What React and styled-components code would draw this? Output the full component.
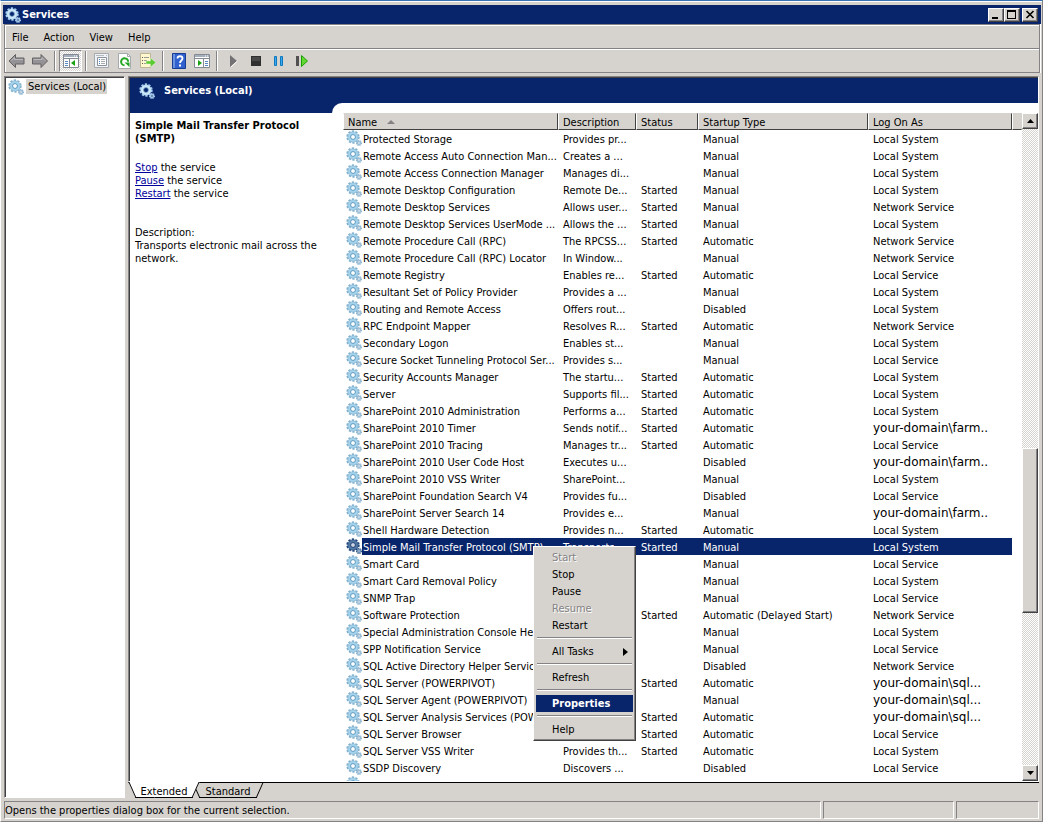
import React from 'react';
import styled, { createGlobalStyle, css } from 'styled-components';

const face = '#d6d3ce';
const navy = '#08246b';
const shadow = '#848284';
const dark = '#424142';

const S = 'Local System';
const L = 'Local Service';
const N = 'Network Service';
const FARM = 'your-domain\\farm..';
const SQL = 'your-domain\\sql...';

// name, description, started, startup type, log on as
const services = [
  ['Protected Storage', 'Provides pr...', 0, 'Manual', S],
  ['Remote Access Auto Connection Man...', 'Creates a ...', 0, 'Manual', S],
  ['Remote Access Connection Manager', 'Manages di...', 0, 'Manual', S],
  ['Remote Desktop Configuration', 'Remote De...', 1, 'Manual', S],
  ['Remote Desktop Services', 'Allows user...', 1, 'Manual', N],
  ['Remote Desktop Services UserMode ...', 'Allows the ...', 1, 'Manual', S],
  ['Remote Procedure Call (RPC)', 'The RPCSS...', 1, 'Automatic', N],
  ['Remote Procedure Call (RPC) Locator', 'In Window...', 0, 'Manual', N],
  ['Remote Registry', 'Enables re...', 1, 'Automatic', L],
  ['Resultant Set of Policy Provider', 'Provides a ...', 0, 'Manual', S],
  ['Routing and Remote Access', 'Offers rout...', 0, 'Disabled', S],
  ['RPC Endpoint Mapper', 'Resolves R...', 1, 'Automatic', N],
  ['Secondary Logon', 'Enables st...', 0, 'Manual', S],
  ['Secure Socket Tunneling Protocol Ser...', 'Provides s...', 0, 'Manual', L],
  ['Security Accounts Manager', 'The startu...', 1, 'Automatic', S],
  ['Server', 'Supports fil...', 1, 'Automatic', S],
  ['SharePoint 2010 Administration', 'Performs a...', 1, 'Automatic', S],
  ['SharePoint 2010 Timer', 'Sends notif...', 1, 'Automatic', FARM],
  ['SharePoint 2010 Tracing', 'Manages tr...', 1, 'Automatic', L],
  ['SharePoint 2010 User Code Host', 'Executes u...', 0, 'Disabled', FARM],
  ['SharePoint 2010 VSS Writer', 'SharePoint...', 0, 'Manual', S],
  ['SharePoint Foundation Search V4', 'Provides fu...', 0, 'Disabled', L],
  ['SharePoint Server Search 14', 'Provides e...', 0, 'Manual', FARM],
  ['Shell Hardware Detection', 'Provides n...', 1, 'Automatic', S],
  ['Simple Mail Transfer Protocol (SMTP)', 'Transports ...', 1, 'Manual', S],
  ['Smart Card', '', 0, 'Manual', L],
  ['Smart Card Removal Policy', '', 0, 'Manual', S],
  ['SNMP Trap', '', 0, 'Manual', L],
  ['Software Protection', '', 1, 'Automatic (Delayed Start)', N],
  ['Special Administration Console Helper', '', 0, 'Manual', S],
  ['SPP Notification Service', '', 0, 'Manual', L],
  ['SQL Active Directory Helper Service', '', 0, 'Disabled', N],
  ['SQL Server (POWERPIVOT)', '', 1, 'Automatic', SQL],
  ['SQL Server Agent (POWERPIVOT)', '', 0, 'Manual', SQL],
  ['SQL Server Analysis Services (POWE...', '', 1, 'Automatic', SQL],
  ['SQL Server Browser', '', 1, 'Automatic', L],
  ['SQL Server VSS Writer', 'Provides th...', 1, 'Automatic', S],
  ['SSDP Discovery', 'Discovers ...', 0, 'Disabled', L],
  ['', '', 0, '', ''],
];

const selected = 24;

const columns = ['Description', 'Status', 'Startup Type', 'Log On As'];

const menuItems = [
  { label: 'Start', disabled: true },
  { label: 'Stop' },
  { label: 'Pause' },
  { label: 'Resume', disabled: true },
  { label: 'Restart' },
  null,
  { label: 'All Tasks', submenu: true },
  null,
  { label: 'Refresh' },
  null,
  { label: 'Properties', active: true },
  null,
  { label: 'Help' },
];

export default function App() {
  return (
    <Window>
      <GlobalStyle />
      <TitleBar>
        <Gear light />
        <Title>Services</Title>
        <Caption aria-label="Minimize">
          <svg width="10" height="9"><path d="M1 7h6v2H1z" /></svg>
        </Caption>
        <Caption aria-label="Maximize">
          <svg width="10" height="9"><path d="M0 0h9v9H0zM1 2v6h7V2z" fillRule="evenodd" /></svg>
        </Caption>
        <Caption aria-label="Close" $apart>
          <svg width="10" height="9"><path d="M1.500 1l7 7M8.500 1l-7 7" stroke="#000" strokeWidth="1.600" /></svg>
        </Caption>
      </TitleBar>
      <MenuBar>
        {['File', 'Action', 'View', 'Help'].map(item => (
          <MenuButton key={item}>{item}</MenuButton>
        ))}
      </MenuBar>
      <Toolbar>
        <Tool aria-label="Back"><ArrowIcon back /></Tool>
        <Tool aria-label="Forward"><ArrowIcon /></Tool>
        <Divider />
        <Tool aria-label="Show/Hide Console Tree" $pressed><PaneIcon tree /></Tool>
        <Divider />
        <Tool aria-label="Properties"><PropertiesIcon /></Tool>
        <Tool aria-label="Refresh"><RefreshIcon /></Tool>
        <Tool aria-label="Export List"><ExportIcon /></Tool>
        <Divider />
        <Tool aria-label="Help"><HelpIcon /></Tool>
        <Tool aria-label="Show/Hide Action Pane"><PaneIcon /></Tool>
        <Divider />
        <Tool aria-label="Start Service">
          <svg width="16" height="16">
            <path d="M5 2v12l7-6z" fill="#737173" />
            <path d="M12.500 8L6 14" stroke="#fff" />
          </svg>
        </Tool>
        <Tool aria-label="Stop Service">
          <svg width="16" height="16">
            <path d="M3 3h10v10H3z" fill="#313031" />
            <path d="M4 4h8v4H4z" fill="#4a494a" />
          </svg>
        </Tool>
        <Tool aria-label="Pause Service">
          <svg width="16" height="16">
            <path d="M3.500 3.500h2v9h-2zM9.500 3.500h2v9h-2z" fill="#39aaef" stroke="#1079bd" />
          </svg>
        </Tool>
        <Tool aria-label="Restart Service">
          <svg width="16" height="16">
            <path d="M2 3h3v10H2z" fill="#525152" />
            <path d="M7.500 2.500v11l6-5.500z" fill="#63d731" stroke="#18a200" />
          </svg>
        </Tool>
      </Toolbar>
      <Body>
        <Tree>
          <Gear />
          <TreeLabel>Services (Local)</TreeLabel>
        </Tree>
        <Main>
          <Pane>
            <PaneHeader>
              <Gear light />
              <PaneTitle>Services (Local)</PaneTitle>
            </PaneHeader>
            <Details>
              <Heading>Simple Mail Transfer Protocol (SMTP)</Heading>
              <Actions>
                <li><a href="#stop">Stop</a> the service</li>
                <li><a href="#pause">Pause</a> the service</li>
                <li><a href="#restart">Restart</a> the service</li>
              </Actions>
              <Text>Description:</Text>
              <Text>Transports electronic mail across the network.</Text>
            </Details>
            <List>
              <TableArea>
                <Table>
                  <colgroup>
                    <Col $width={215} />
                    <Col $width={78} />
                    <Col $width={62} />
                    <Col $width={170} />
                    <Col $width={144} />
                    <col />
                  </colgroup>
                  <thead>
                    <tr>
                      <Th>
                        Name
                        <SortArrow width="8" height="4"><path d="M4 0l4 4H0z" fill={shadow} /></SortArrow>
                      </Th>
                      {columns.map(name => <Th key={name}>{name}</Th>)}
                      <Th as="td" $last />
                    </tr>
                  </thead>
                  <tbody>{services.map(ServiceRow)}</tbody>
                </Table>
                <ContextMenu>{menuItems.map(ContextItem)}</ContextMenu>
              </TableArea>
              <Scrollbar>
                <ScrollButton aria-label="Scroll up">
                  <svg width="7" height="4"><path d="M3.500 0L7 4H0z" /></svg>
                </ScrollButton>
                <Track>
                  <Thumb />
                </Track>
                <ScrollButton aria-label="Scroll down">
                  <svg width="7" height="4"><path d="M3.500 4L7 0H0z" /></svg>
                </ScrollButton>
              </Scrollbar>
            </List>
          </Pane>
          <Tabs>
            <Tab $active>Extended</Tab>
            <Tab>Standard</Tab>
          </Tabs>
        </Main>
      </Body>
      <StatusBar>
        <StatusCell>Opens the properties dialog box for the current selection.</StatusCell>
        <StatusCell $width={131} />
        <StatusCell $width={83} />
      </StatusBar>
    </Window>
  );
}

const ServiceRow = ([name, description, started, startup, account], i) => {
  const active = i === selected;
  return (
    <Row key={i} $active={active}>
      <td>
        <NameCell>
          <Gear dim={active} />
          <Name $active={active}>{name}</Name>
        </NameCell>
      </td>
      <Td>{description}</Td>
      <Td>{started ? 'Started' : ''}</Td>
      <Td>{startup}</Td>
      <Td $wide={account.startsWith('your')}>{account}</Td>
      <td />
    </Row>
  );
};

const ContextItem = (item, i) => {
  if (!item) return <Rule key={i} />;
  return (
    <Item key={i} disabled={item.disabled} $active={item.active}>
      {item.label}
      {item.submenu && <svg width="5" height="8"><path d="M0 0l5 4-5 4z" /></svg>}
    </Item>
  );
};

function Gear({ light, dim }) {
  const body = dim ? '#5279a5' : light ? '#cee7f7' : '#a5d3ec';
  const teeth = dim ? '#21457b' : light ? '#a5cfef' : '#84b2ce';
  const rim = dim ? '#183463' : light ? '#5a8abd' : '#4a8ab5';
  const small = dim ? '#6b8eb5' : light ? '#a5c7e7' : '#9cbed6';
  const hole = light ? navy : dim ? '#ced7e7' : '#fff';
  return (
    <GearSvg viewBox="0 0 16 16">
      <circle cx="7" cy="7" r="5.800" fill="none" stroke={teeth} strokeWidth="1.800" strokeDasharray="2.200 1.440" />
      <circle cx="7" cy="7" r="3.800" fill={hole} stroke={body} strokeWidth="3" />
      <circle cx="7" cy="7" r="5.200" fill="none" stroke={teeth} strokeWidth="0.600" />
      <circle cx="7" cy="7" r="2.400" fill="none" stroke={rim} strokeWidth="0.800" />
      <circle cx="13" cy="13" r="2.400" fill="none" stroke={teeth} strokeWidth="1.200" strokeDasharray="1.100 0.780" />
      <circle cx="13" cy="13" r="1.500" fill={hole} stroke={small} strokeWidth="1.600" />
    </GearSvg>
  );
}

function ArrowIcon({ back }) {
  return (
    <svg width="18" height="16" viewBox="0 0 18 16">
      <path
        d={back ? 'M1 8l6.500-6.500V5H16v6H7.500v3.500z' : 'M16.500 8L10 1.500V5H1.500v6H10v3.500z'}
        fill="#949294"
        stroke="#636163"
        strokeLinejoin="round"
      />
      <path
        d={back ? 'M3.500 7.500l3-3v2H15' : 'M2.500 6.500H11v-2l3 3'}
        fill="none"
        stroke="#bdbabd"
      />
    </svg>
  );
}

function PaneIcon({ tree }) {
  return (
    <svg width="16" height="16" viewBox="0 0 16 16">
      <path d="M.5 1.500h15v13H.5z" fill="#fff" stroke="#848a94" />
      <path d="M1 2h14v2H1z" fill="#a5aebd" />
      <path d="M11 3h1M13 3h1" stroke="#fff" />
      <path d="M1 5.500h14" stroke="#848a94" />
      {tree ? (
        <>
          <path d="M6.500 6v8" stroke="#848a94" />
          <path d="M2 8.500h3M2 10.500h3M2 12.500h3" stroke="#5a8ac6" />
          <path d="M12 7v6l-4-3z" fill="#18a210" />
        </>
      ) : (
        <>
          <path d="M9.500 6v8" stroke="#848a94" />
          <path d="M11 8.500h3M11 10.500h3M11 12.500h3" stroke="#5a8ac6" />
          <path d="M4 7v6l4-3z" fill="#18a210" />
        </>
      )}
    </svg>
  );
}

function PropertiesIcon() {
  return (
    <svg width="16" height="16" viewBox="0 0 16 16">
      <path d="M.5.5h14v14H.5z" fill="#eff3f7" stroke="#a5aaad" />
      <path d="M2 2.500h8M12 2.500h1" stroke="#b5babd" />
      <path d="M3.500 4.500h9v8h-9z" fill="#fff" stroke="#8c929c" />
      <path d="M5 6.500h1M5 8.500h1M5 10.500h1" stroke="#4a82c6" />
      <path d="M7 6.500h4M7 8.500h4M7 10.500h4" stroke="#a5aaad" />
    </svg>
  );
}

function RefreshIcon() {
  return (
    <svg width="16" height="16" viewBox="0 0 16 16">
      <path d="M1.500.5h9l3 3v12h-12z" fill="#fff" stroke="#a5aaad" />
      <path d="M10.500.5v3h3" fill="none" stroke="#a5aaad" />
      <path d="M7.500 12.200a3.500 3.500 0 1 1 3.600-3.400" fill="none" stroke="#21a621" strokeWidth="2" />
      <path d="M7.500 9.500h5v4.500z" fill="#21a621" />
    </svg>
  );
}

function ExportIcon() {
  return (
    <svg width="16" height="16" viewBox="0 0 16 16">
      <path d="M.5.5h10v14H.5z" fill="#fff7ce" stroke="#bdb694" />
      <path d="M2 4.500h1M2 7.500h1M2 10.500h1" stroke="#5a595a" />
      <path d="M4 4.500h5M4 7.500h3M4 10.500h2" stroke="#9c9a8c" />
      <path d="M6 8h4.500V5L16 9.500 10.500 14v-3H6z" fill="#5acb31" stroke="#e7f7de" strokeWidth="0.500" />
    </svg>
  );
}

function HelpIcon() {
  return (
    <svg width="14" height="16" viewBox="0 0 14 16">
      <path d="M.5.5h13v15H.5z" fill="#3161ce" stroke="#183c94" />
      <path d="M1 1h2v14H1z" fill="#6b92de" />
      <path d="M5.500 5.500c0-3 5-3 5 0 0 2-2.500 2-2.500 4.500" fill="none" stroke="#fff" strokeWidth="1.800" />
      <path d="M7 11.500h2v2H7z" fill="#fff" />
    </svg>
  );
}

const GlobalStyle = createGlobalStyle`
  * {
    box-sizing: border-box;
  }
  body {
    margin: 0;
    color: #000;
    font: 11px/13px Tahoma, "DejaVu Sans Condensed", sans-serif;
  }
  button {
    margin: 0;
    padding: 0;
    border: 0;
    background: none;
    color: inherit;
    font: inherit;
  }
`;

const raised = css`
  background: ${face};
  border: 1px solid;
  border-color: #fff ${dark} ${dark} #fff;
  box-shadow: inset -1px -1px ${shadow};
`;

const Window = styled.div`
  display: flex;
  flex-direction: column;
  height: 100vh;
  min-height: 400px;
  padding: 2px 1px 2px 2px;
  background: ${face};
  border: 1px solid ${shadow};
  border-top-color: #3971b5;
  border-left-color: #fff;
  box-shadow: inset 0 1px #fff;
`;

const GearSvg = styled.svg`
  flex: none;
  width: 16px;
  height: 16px;
`;

const TitleBar = styled.header`
  display: flex;
  align-items: center;
  flex: none;
  height: 19px;
  margin-top: 2px;
  padding: 0 3px 0 2px;
  background: ${navy};
  color: #fff;
`;

const Title = styled.h1`
  flex: 1;
  margin: 0 0 0 1px;
  font-size: 11px;
`;

const Caption = styled.button`
  ${raised}
  display: flex;
  align-items: center;
  justify-content: center;
  width: 16px;
  height: 14px;
  margin-left: ${props => (props.$apart ? 2 : 0)}px;
`;

const bar = css`
  display: flex;
  flex: none;
  height: 24px;
  margin: 0 1px;
  border: 1px solid ${shadow};
  border-bottom: 0;
  box-shadow: inset 1px 1px #fff, 1px 0 #fff;
`;

const MenuBar = styled.nav`
  ${bar}
`;

const MenuButton = styled.button`
  padding: 2px 8px 0 7px;
`;

const Toolbar = styled.div`
  ${bar}
  align-items: center;
  height: 25px;
  border-bottom: 1px solid ${shadow};
`;

const Tool = styled.button`
  display: flex;
  align-items: center;
  justify-content: center;
  width: 23px;
  height: 22px;
  ${props => props.$pressed && css`
    border: 1px solid;
    border-color: ${shadow} #fff #fff ${shadow};
    background: repeating-conic-gradient(#fff 0 25%, ${face} 0 50%) 0 0 / 2px 2px;
  `}
`;

const Divider = styled.span`
  width: 2px;
  height: 20px;
  margin: 0 3px;
  border-left: 1px solid ${shadow};
  border-right: 1px solid #fff;
`;

const Body = styled.div`
  display: flex;
  flex: 1;
  min-height: 0;
  margin: 3px 2px 3px 1px;
`;

const sunken = css`
  background: #fff;
  border: 1px solid;
  border-color: ${shadow} #fff #fff ${shadow};
  box-shadow: inset 1px 1px ${dark};
`;

const Tree = styled.aside`
  ${sunken}
  display: flex;
  align-items: flex-start;
  flex: none;
  width: 121px;
  padding: 2px 3px;
`;

const TreeLabel = styled.span`
  margin-left: 2px;
  padding: 1px 1px 1px 2px;
  background: ${face};
`;

const Main = styled.main`
  display: flex;
  flex-direction: column;
  flex: 1;
  min-width: 0;
  margin-left: 3px;
`;

const Pane = styled.section`
  ${sunken}
  display: grid;
  grid-template: 25px minmax(0, 1fr) / 202px minmax(0, 1fr);
  flex: 1;
  min-height: 0;
  padding: 1px 0 0 1px;
  background: linear-gradient(${navy} 60px, #fff 0);
`;

const PaneHeader = styled.div`
  display: flex;
  align-items: center;
  grid-column: 1 / 3;
  padding-left: 9px;
  color: #fff;
`;

const PaneTitle = styled.h2`
  margin: 0 0 0 9px;
  font-size: 11px;
`;

const Details = styled.div`
  margin-top: 10px;
  padding: 6px 8px 0 5px;
  background: #fff;
`;

const Heading = styled.h3`
  margin: 0 0 16px;
  font-size: 11px;
`;

const Actions = styled.ul`
  margin: 0 0 26px;
  padding: 0;
  list-style: none;

  a {
    color: #00009c;
  }
`;

const Text = styled.p`
  margin: 0;
`;

const List = styled.div`
  display: flex;
  min-height: 0;
  padding: 10px 0 0 11px;
  background: #fff;
  border-top-left-radius: 10px;
`;

const TableArea = styled.div`
  position: relative;
  flex: 1;
  min-width: 0;
  overflow: hidden;
`;

const Table = styled.table`
  width: 100%;
  table-layout: fixed;
  border-collapse: separate;
  border-spacing: 0;

  td {
    padding: 0;
  }
`;

const Col = styled.col`
  width: ${props => props.$width}px;
`;

const Th = styled.th`
  height: 17px;
  padding: 1px 4px 0;
  background: ${face};
  border: 1px solid;
  border-color: ${face} ${props => (props.$last ? face : dark)} ${dark} #fff;
  font-weight: normal;
  text-align: left;
  white-space: nowrap;
`;

const SortArrow = styled.svg`
  margin: 0 0 2px 10px;
`;

const Row = styled.tr`
  height: 17px;
  ${props => props.$active && css`
    color: #fff;

    td:nth-child(n + 2):nth-child(-n + 5) {
      background: ${navy};
    }
  `}
`;

const NameCell = styled.div`
  display: flex;
  height: 17px;
  padding-left: 3px;
`;

const Name = styled.span`
  flex: 1;
  padding: 3px 0 1px 1px;
  overflow: hidden;
  white-space: nowrap;
  background: ${props => (props.$active ? navy : 'none')};
`;

const Td = styled.td`
  &&& {
    padding: 2px 0 0 5px;
  }
  line-height: 15px;
  overflow: hidden;
  white-space: nowrap;
  ${props => props.$wide && css`
    font-family: Verdana, 'DejaVu Sans', sans-serif;
    font-size: 12px;
  `}
`;

const ContextMenu = styled.div`
  ${raised}
  position: absolute;
  top: 433px;
  left: 190px;
  width: 103px;
  padding: 2px;
`;

const Item = styled.button`
  display: flex;
  align-items: center;
  justify-content: space-between;
  width: 100%;
  height: 17px;
  padding: 0 5px 0 16px;
  ${props => props.disabled && css`
    color: ${shadow};
    text-shadow: 1px 1px #fff;
  `}
  ${props => props.$active && css`
    background: ${navy};
    color: #fff;
    font-weight: bold;
  `}
`;

const Rule = styled.hr`
  height: 2px;
  margin: 3px 1px 4px;
  border: 0;
  border-top: 1px solid ${shadow};
  border-bottom: 1px solid #fff;
`;

const Scrollbar = styled.div`
  display: flex;
  flex-direction: column;
  width: 16px;
`;

const ScrollButton = styled.button`
  ${raised}
  display: flex;
  align-items: center;
  justify-content: center;
  flex: none;
  height: 16px;
`;

const Track = styled.div`
  display: grid;
  grid-template-rows: 318fr 165fr 152fr;
  flex: 1;
  background: repeating-conic-gradient(#fff 0 25%, ${face} 0 50%) 0 0 / 2px 2px;
`;

const Thumb = styled.div`
  ${raised}
  grid-row: 2;
`;

const Tabs = styled.div`
  display: flex;
  flex: none;
  height: 16px;
  padding-left: 4px;
  border-top: 1px solid #000;
`;

const Tab = styled.button`
  position: relative;
  z-index: 0;
  width: 64px;
  height: 15px;
  padding-top: 2px;

  &::before,
  &::after {
    content: '';
    position: absolute;
    z-index: -1;
    inset: 0 40% 0 0;
    background: ${face};
    border: solid #000;
    border-width: 0 0 1px 1px;
    transform: skewX(24deg);
  }
  &::after {
    inset: 0 0 0 40%;
    border-width: 0 1px 1px 0;
    transform: skewX(-24deg);
  }
  ${props => props.$active && css`
    z-index: 1;
    height: 16px;
    margin-top: -1px;
    padding-top: 3px;

    &::before,
    &::after {
      background: #fff;
    }
  `}
`;

const StatusBar = styled.footer`
  display: flex;
  flex: none;
  gap: 2px;
  height: 18px;
  margin: 0 2px 0 1px;
`;

const StatusCell = styled.div`
  flex: ${props => (props.$width ? `0 0 ${props.$width}px` : 1)};
  padding: 2px 0 0;
  border: 1px solid;
  border-color: ${shadow} #fff #fff ${shadow};
`;
